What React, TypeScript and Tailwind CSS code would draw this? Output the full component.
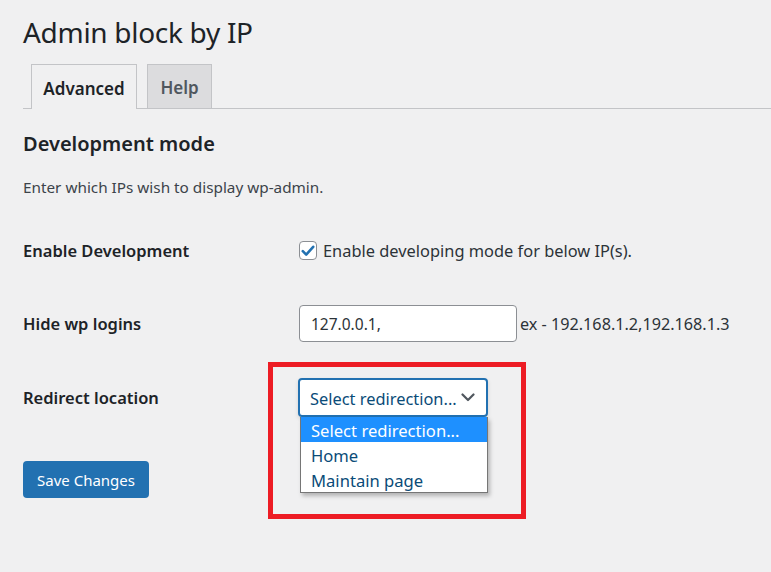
import React from "react";

const OPTIONS = ["Select redirection...", "Home", "Maintain page"];

function Chevron() {
  return (
    <svg width="14" height="9" viewBox="0 0 14 9" fill="none" aria-hidden>
      <path d="M1.5 1.5 L7 7 L12.5 1.5" stroke="#50575e" strokeWidth="2.2" strokeLinecap="round" strokeLinejoin="round" />
    </svg>
  );
}

export default function App() {
  return (
    <div className="relative min-h-[572px] w-[771px] overflow-hidden bg-[#f0f0f1] pl-[23px] font-['Noto_Sans','Open_Sans',sans-serif] text-[#1d2327]">
      <h1 className="pt-[12px] text-[28px] leading-[40px] font-normal tracking-[-0.3px]">Admin block by IP</h1>

      {/* Tabs */}
      <div className="mt-[13px] flex h-[44px] items-end border-b border-[#c3c4c7] pl-[8px]">
        <div className="-mb-px flex h-[45px] w-[106px] items-center justify-center border border-b-0 border-[#c3c4c7] bg-[#f0f0f1] pt-[3px] text-[17px] font-semibold text-[#1d2327]">
          Advanced
        </div>
        <div className="ml-[10px] flex h-[44px] w-[65px] items-center justify-center border border-b-0 border-[#c3c4c7] bg-[#dcdcde] pt-[3px] text-[17px] font-semibold text-[#50575e]">
          Help
        </div>
      </div>

      <h2 className="mt-[20px] text-[20px] leading-[30px] font-semibold">Development mode</h2>
      <p className="mt-[16px] text-[15.3px] leading-[24px] text-[#3c434a]">Enter which IPs wish to display wp-admin.</p>

      {/* Form rows */}
      <div className="mt-[26px] flex h-[50px] items-center">
        <div className="w-[276px] pt-[3px] text-[16.5px] font-semibold">Enable Development</div>
        <label className="flex items-center gap-[6px] text-[16.4px] text-[#2c3338]">
          <span className="mt-[2px] flex h-[19px] w-[18px] items-center justify-center rounded-[4px] border border-[#8c8f94] bg-white">
            <svg width="14" height="12" viewBox="0 0 14 12" aria-hidden>
              <path d="M1.8 6.2 L5.2 9.6 L12.2 1.8" stroke="#2271b1" strokeWidth="2.6" fill="none" strokeLinecap="round" strokeLinejoin="round" />
            </svg>
          </span>
          <span className="pt-[3px]">Enable developing mode for below IP(s).</span>
        </label>
      </div>

      <div className="mt-[23px] flex h-[50px] items-center">
        <div className="w-[276px] pt-[3px] text-[16.5px] font-semibold">Hide wp logins</div>
        <div className="flex h-[37px] w-[218px] items-center rounded-[4px] border border-[#8c8f94] bg-white pl-[11px] pt-[3px] text-[15.5px] text-[#2c3338]">
          127.0.0.1,
        </div>
        <span className="ml-[3px] pt-[3px] text-[16.2px] text-[#2c3338]">ex - 192.168.1.2,192.168.1.3</span>
      </div>

      <div className="mt-[24px] flex h-[50px] items-center">
        <div className="w-[275px] pt-[3px] text-[16.5px] font-semibold">Redirect location</div>
        <div className="relative">
          <div className="flex h-[39px] w-[190px] items-center justify-between rounded-[4px] border-2 border-[#2271b1] bg-white pl-[10px] pr-[11px] text-[16.4px] text-[#0a4b78] shadow-[0_2px_4px_rgba(0,0,0,0.12)]">
            <span className="pt-[4px]">Select redirection...</span>
            <Chevron />
          </div>
          <ul className="absolute left-[2px] top-[39px] z-10 w-[188px] border border-t-0 border-[#767676] bg-white shadow-[2px_3px_4px_rgba(0,0,0,0.25)]">
            {OPTIONS.map((o, i) => (
              <li
                key={o}
                className={
                  i === 0
                    ? "h-[25px] bg-[#1e90ff] pl-[10px] pt-[2px] text-[16.6px] leading-[23px] text-white"
                    : "h-[25px] pl-[10px] pt-[2px] text-[16.6px] leading-[23px] text-[#0a4b78]"
                }
              >
                {o}
              </li>
            ))}
          </ul>
        </div>
      </div>

      <button className="mt-[39px] flex h-[37px] w-[126px] items-center justify-center rounded-[4px] bg-[#2271b1] pt-[2px] text-[15px] text-white">
        Save Changes
      </button>

      {/* Annotation box */}
      <div className="pointer-events-none absolute left-[268px] top-[362px] h-[157px] w-[258px] border-[5px] border-[#ed1c24]" />
    </div>
  );
}
